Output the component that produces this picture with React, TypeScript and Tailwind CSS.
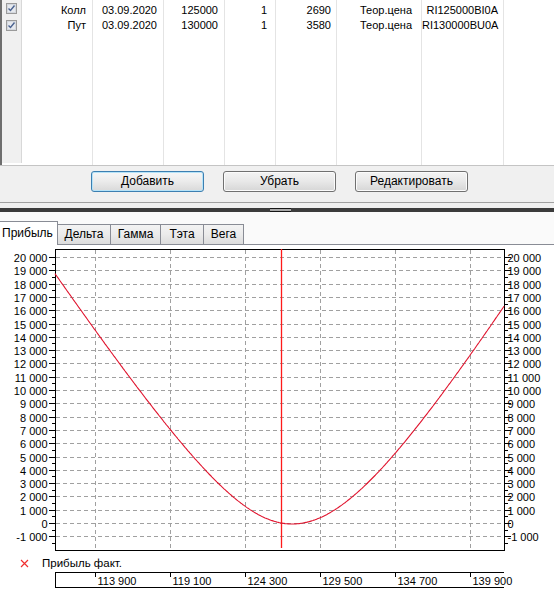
import React from 'react';

type Row = { type: string; date: string; strike: string; qty: string; price: string; kind: string; code: string };

const rows: Row[] = [
  { type: 'Колл', date: '03.09.2020', strike: '125000', qty: '1', price: '2690', kind: 'Теор.цена', code: 'RI125000BI0A' },
  { type: 'Пут', date: '03.09.2020', strike: '130000', qty: '1', price: '3580', kind: 'Теор.цена', code: 'RI130000BU0A' },
];

// column widths include the right grid line
const columns: { key: keyof Row; cls: string }[] = [
  { key: 'type', cls: 'w-[71px] pr-[6px]' },
  { key: 'date', cls: 'w-[71px] pr-[6px]' },
  { key: 'strike', cls: 'w-[61px] pr-[6px]' },
  { key: 'qty', cls: 'w-[51px] pr-[8px]' },
  { key: 'price', cls: 'w-[61px] pr-[5px]' },
  { key: 'kind', cls: 'w-[85px] pr-[9px]' },
  { key: 'code', cls: 'w-[82px] pr-[5px]' },
];

const CheckBox = () => (
  <svg width="11" height="11" viewBox="0 0 11 11" shapeRendering="crispEdges">
    <rect x="0.5" y="0.5" width="10" height="10" fill="#f4f4f4" stroke="#9a9a9a" />
    <rect x="1.5" y="1.5" width="8" height="8" fill="#e6e9ee" stroke="#d4d8de" />
    <path d="M2.5 5.5 L4.5 7.5 L8.5 2.5" fill="none" stroke="#4a6290" strokeWidth="1.4" shapeRendering="auto" />
  </svg>
);

const fmt = (v: number) => {
  const s = Math.abs(v).toString();
  const body = s.length > 3 ? `${s.slice(0, s.length - 3)} ${s.slice(-3)}` : s;
  return v < 0 ? `-${body}` : body;
};

const yOf = (v: number) => Math.round(523 - v * 0.0133) + 0.5;

const levels: number[] = [];
for (let v = 20000; v >= -1000; v -= 1000) levels.push(v);
const minors: number[] = [];
for (let v = 19500; v >= -1500; v -= 1000) minors.push(v);

const xGrid = [0, 1, 2, 3, 4, 5].map((k) => 95.5 + 75 * k);
const xLabels = ['113 900', '119 100', '124 300', '129 500', '134 700', '139 900'];

const curve: string[] = [];
for (let x = 55; x <= 504; x++) {
  const dx = x - 292;
  const s = dx < 0 ? 1.52 : 1.62;
  const c = dx < 0 ? 134 : 162;
  const h = Math.sqrt(c * c + (s * dx) * (s * dx)) - c;
  curve.push(`${x},${(524 - h).toFixed(1)}`);
}

const font = "'Liberation Sans', Arial, sans-serif";

export default function App() {
  return (
    <div className="w-[554px] h-[590px] overflow-hidden bg-white text-black font-['Liberation_Sans',Arial,sans-serif] text-[11px]">
      {/* top panel: legs grid + buttons */}
      <div className="h-[203px] bg-[#f0f0f0] border-b border-[#a0a0a0] flex flex-col">
        <div className="h-[166px] flex bg-white border-b border-[#c4c4c4]">
          <div className="w-[2px] bg-[#6e6e6e]" />
          <div className="w-[20px] h-[163px] bg-[#f0f0f0] border-r border-[#d8d8d8] flex flex-col items-center pt-[3px] gap-[6px]">
            {rows.map((r) => (
              <CheckBox key={r.code} />
            ))}
          </div>
          {columns.map((col) => (
            <div key={col.key} className={`${col.cls} h-full border-r border-[#e4e4e4] pt-[3px] flex flex-col`}>
              {rows.map((r) => (
                <div key={r.code} className="h-[15px] leading-[15px] text-right whitespace-nowrap">
                  {r[col.key]}
                </div>
              ))}
            </div>
          ))}
          <div className="flex-1" />
        </div>
        <div className="flex pl-[91px] pt-[5px] gap-[19px] text-[12px]">
          <button className="w-[113px] h-[21px] rounded-[3px] border border-[#3c7fb1] shadow-[inset_0_0_0_1px_#b6e3f8] bg-linear-to-b from-[#f7f7f7] via-[#ebebeb] to-[#d9d9d9] leading-[19px]">
            Добавить
          </button>
          <button className="w-[113px] h-[21px] rounded-[3px] border border-[#707070] shadow-[inset_0_0_0_1px_#fbfbfb] bg-linear-to-b from-[#f4f4f4] via-[#e8e8e8] to-[#d6d6d6] leading-[19px]">
            Убрать
          </button>
          <button className="w-[113px] h-[21px] rounded-[3px] border border-[#707070] shadow-[inset_0_0_0_1px_#fbfbfb] bg-linear-to-b from-[#f4f4f4] via-[#e8e8e8] to-[#d6d6d6] leading-[19px]">
            Редактировать
          </button>
        </div>
      </div>

      {/* splitter */}
      <div className="h-[5px] bg-[#f0f0f0]" />
      <div className="h-[4px] bg-[#3c3c3c] flex">
        <div className="ml-[270px] w-[21px] h-full border-y border-[#151515] bg-[#a8a8a8]" />
      </div>

      {/* tabs */}
      <div className="h-[33px] bg-[#fafafa] flex items-end text-[12px]">
        <div className="w-[58px] h-[24px] bg-white border-t border-r border-[#898c95] pl-[2px] leading-[22px]">Прибыль</div>
        {[
          ['Дельта', 'w-[53px]'],
          ['Гамма', 'w-[50px]'],
          ['Тэта', 'w-[43px]'],
          ['Вега', 'w-[40px]'],
        ].map(([t, w]) => (
          <div
            key={t}
            className={`${w} h-[21px] border-t border-r border-b border-[#898c95] bg-linear-to-b from-[#f3f3f3] via-[#ebebeb] to-[#dcdcdc] text-center leading-[19px]`}
          >
            {t}
          </div>
        ))}
        <div className="flex-1 h-px bg-[#898c95]" />
      </div>

      {/* chart */}
      <svg width="554" height="311" viewBox="0 245 554 311" className="block" fontFamily={font} fontSize="11">
        <g shapeRendering="crispEdges" stroke="#a0a0a0" strokeDasharray="4 3">
          {levels.map((v) => (
            <line key={v} x1="56" x2="504" y1={yOf(v)} y2={yOf(v)} />
          ))}
          {xGrid.map((x) => (
            <line key={x} x1={x} x2={x} y1="250" y2="550" />
          ))}
        </g>
        <g shapeRendering="crispEdges" stroke="#000">
          <rect x="55.5" y="249.5" width="449" height="301" fill="none" />
          {levels.map((v) => (
            <g key={v}>
              <line x1="49" x2="55" y1={yOf(v)} y2={yOf(v)} />
              <line x1="505" x2="511" y1={yOf(v)} y2={yOf(v)} />
            </g>
          ))}
          {minors.map((v) => (
            <g key={v}>
              <line x1="52" x2="55" y1={yOf(v)} y2={yOf(v)} />
              <line x1="505" x2="508" y1={yOf(v)} y2={yOf(v)} />
            </g>
          ))}
        </g>
        <g fill="#000">
          {levels.map((v) => (
            <g key={v}>
              <text x="47.5" y={yOf(v)} textAnchor="end" dominantBaseline="central">
                {fmt(v)}
              </text>
              <text x="507.5" y={yOf(v)} dominantBaseline="central">
                {fmt(v)}
              </text>
            </g>
          ))}
        </g>
        <line x1="281.5" x2="281.5" y1="249" y2="548" stroke="#ff1a1a" strokeWidth="1.3" />
        <polyline points={curve.join(' ')} fill="none" stroke="#e0142e" strokeWidth="1.1" />
      </svg>

      {/* legend */}
      <div className="h-[15px] flex items-center">
        <svg width="9" height="9" viewBox="0 0 9 9" className="ml-[20px]">
          <path d="M1 1 L8 8 M8 1 L1 8" stroke="#f03030" strokeWidth="1.2" />
        </svg>
        <span className="ml-[13px] text-[11.5px] leading-[15px]">Прибыль факт.</span>
      </div>

      {/* x axis */}
      <svg width="554" height="19" viewBox="0 571 554 19" className="block" fontFamily={font} fontSize="11">
        <g shapeRendering="crispEdges" stroke="#000">
          <line x1="55" x2="504" y1="572.5" y2="572.5" />
          <line x1="55" x2="504" y1="587.5" y2="587.5" />
          <line x1="55.5" x2="55.5" y1="572" y2="588" />
          {xGrid.map((x) => (
            <line key={x} x1={x} x2={x} y1="572" y2="577" />
          ))}
        </g>
        {xGrid.map((x, i) => (
          <text key={x} x={x + 2} y="580.5" dominantBaseline="central">
            {xLabels[i]}
          </text>
        ))}
      </svg>
    </div>
  );
}
